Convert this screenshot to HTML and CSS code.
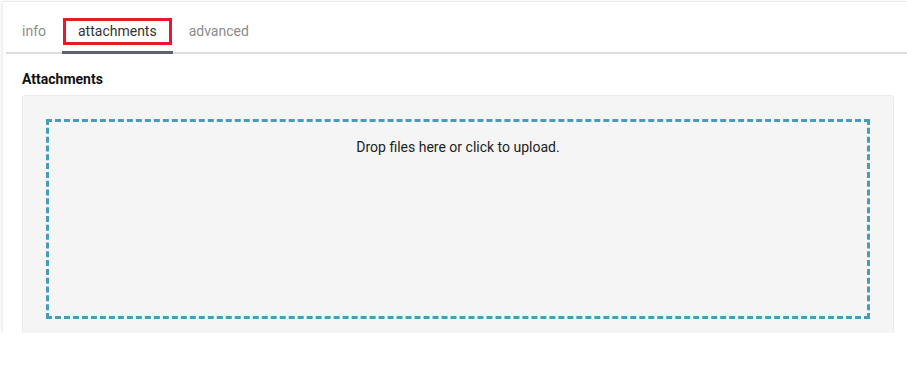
FILE: index.html
```html
<!DOCTYPE html>
<html lang="en">
<head>
<meta charset="utf-8">
<title>Attachments</title>
<link rel="stylesheet" href="styles.css">
</head>
<body>
<div class="page">
  <ul class="tabs">
    <li class="tab"><span class="tab-link">info</span></li>
    <li class="tab active"><span class="tab-link focused">attachments</span></li>
    <li class="tab"><span class="tab-link">advanced</span></li>
  </ul>
  <div class="content">
    <h2 class="heading">Attachments</h2>
    <div class="panel">
      <div class="dropzone">Drop files here or click to upload.</div>
    </div>
  </div>
</div>
</body>
</html>
```
FILE: styles.css
```css
html, body {
  margin: 0;
  padding: 0;
  background: #fff;
}
body {
  font-family: Roboto, "Liberation Sans", sans-serif;
  font-size: 14px;
  color: #333;
}
.page {
  margin: 1px 0 0 3px;
  height: 332px;
  box-sizing: border-box;
  border-top: 1px solid #ececec;
  box-shadow: -2px 0 3px rgba(0, 0, 0, 0.07);
  overflow: hidden;
  background: #fff;
}
.tabs {
  display: flex;
  list-style: none;
  margin: 0 0 0 3px;
  padding: 0;
  border-bottom: 2px solid #dddddd;
}
.tab {
  padding: 19px 4px 9px;
  margin-bottom: -2px;
  border-bottom: 3px solid transparent;
  color: #8c8c8c;
}
.tab.active {
  border-bottom-color: #5b6372;
  color: #333;
}
.tab-link {
  display: inline-block;
  padding: 0 12px;
  height: 21px;
  line-height: 21px;
}
.tab-link.focused {
  outline: 3px solid #e8192c;
}
.content {
  padding: 0 13px 0 19px;
}
.heading {
  margin: 15px 0 6px;
  font-size: 14px;
  line-height: 20px;
  font-weight: 700;
  color: #111;
}
.panel {
  background: #f5f5f5;
  border: 1px solid #ebebeb;
  border-radius: 3px;
  padding: 23px;
}
.dropzone {
  height: 200px;
  box-sizing: border-box;
  border: 3px dashed #479db8;
  padding-top: 15px;
  line-height: 20px;
  text-align: center;
  color: #222;
}
```
